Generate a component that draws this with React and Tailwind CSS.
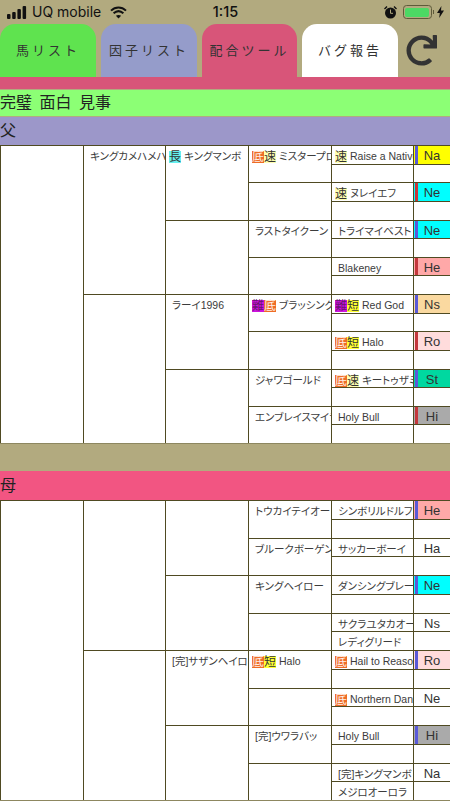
import { FaRedo } from 'react-icons/fa'

const badgeStyles = {
  長: 'bg-[#66eeee] text-[#333]',
  底: 'bg-[#ee6c26] text-[#fff0e8]',
  速: 'bg-[#ffffb0] text-[#333]',
  難: 'bg-[#cc14dc] text-[#6a1470]',
  短: 'bg-[#ffff33] text-[#333]',
}

const sire = {
  col2: [{ name: 'キングカメハメハ' }, {}],
  col3: [{ badges: ['長'], name: 'キングマンボ' }, {}, { name: 'ラーイ1996' }, {}],
  col4: [
    { badges: ['底', '速'], name: 'ミスタープロスペクター' },
    {},
    { name: 'ラストタイクーン' },
    {},
    { badges: ['難', '底'], name: 'ブラッシンググルーム' },
    {},
    { name: 'ジャワゴールド' },
    { name: 'エンブレイスマイラブ' },
  ],
  col5: [
    { badges: ['速'], name: 'Raise a Native', factor: 'Na', bg: 'bg-[#ffff00]', bar: 'bg-[#5a5ad8]' },
    { badges: ['速'], name: 'ヌレイエフ', factor: 'Ne', bg: 'bg-[#00ffff]', bar: 'bg-[#c4383c]' },
    { name: 'トライマイベスト', factor: 'Ne', bg: 'bg-[#00ffff]', bar: 'bg-[#5a5ad8]' },
    { name: 'Blakeney', factor: 'He', bg: 'bg-[#ffa8a8]', bar: 'bg-[#c4383c]' },
    { badges: ['難', '短'], name: 'Red God', factor: 'Ns', bg: 'bg-[#fad9a0]', bar: 'bg-[#5a5ad8]' },
    { badges: ['底', '短'], name: 'Halo', factor: 'Ro', bg: 'bg-[#ffdcdc]', bar: 'bg-[#c4383c]' },
    { badges: ['底', '速'], name: 'キートゥザミント', factor: 'St', bg: 'bg-[#00d8a0]', bar: 'bg-[#5a5ad8]' },
    { name: 'Holy Bull', factor: 'Hi', bg: 'bg-[#aaaaaa]', bar: 'bg-[#c4383c]' },
  ],
}

const dam = {
  col2: [{}, {}],
  col3: [{}, {}, { name: '[完]サザンヘイロー' }, {}],
  col4: [
    { name: 'トウカイテイオー' },
    { name: 'ブルークボーゲン' },
    { name: 'キングヘイロー' },
    {},
    { badges: ['底', '短'], name: 'Halo' },
    {},
    { name: '[完]ウワラバッ' },
    {},
  ],
  col5: [
    { name: 'シンボリルドルフ', factor: 'He', bg: 'bg-[#ffa8a8]', bar: 'bg-[#5a5ad8]' },
    { name: 'サッカーボーイ', factor: 'Ha' },
    { name: 'ダンシングブレーヴ', factor: 'Ne', bg: 'bg-[#00ffff]', bar: 'bg-[#5a5ad8]' },
    { name: 'サクラユタカオー', factor: 'Ns', sub: 'レディグリード' },
    { badges: ['底'], name: 'Hail to Reason', factor: 'Ro', bg: 'bg-[#ffdcdc]', bar: 'bg-[#5a5ad8]' },
    { badges: ['底'], name: 'Northern Dancer', factor: 'Ne' },
    { name: 'Holy Bull', factor: 'Hi', bg: 'bg-[#aaaaaa]', bar: 'bg-[#5a5ad8]' },
    { name: '[完]キングマンボ', factor: 'Na', sub: 'メジロオーロラ' },
  ],
}

const Name = ({ badges = [], name }) => (
  <>
    {badges.map((b, i) => (
      <span key={i} className={`inline-block w-[12px] h-[12px] text-[12px] leading-[12px] align-[-1px] [font-feature-settings:'normal'] ${badgeStyles[b]}`}>
        {b}
      </span>
    ))}
    {name && <span className="ml-[3px]">{name}</span>}
  </>
)

// spans are fixed per generation, so these classes stay written out in full
const Cell = ({ span, item = {} }) => (
  <div className={`${span} border-l border-t border-[#4f4a22] pl-[3px] overflow-hidden whitespace-nowrap text-[10.5px] leading-[20px] text-[#3c3c3c] [font-feature-settings:'palt']`}>
    <Name {...item} />
  </div>
)

const FactorCell = ({ item = {} }) => (
  <div className={`flex row-span-1 border-l border-t border-[#4f4a22] overflow-hidden ${item.bg || 'bg-white'}`}>
    <div className={`ml-[1px] w-[3px] shrink-0 ${item.bar || ''}`} />
    <div className="flex-1 pr-[4px] text-center text-[13px] leading-[20px] text-[#333]">{item.factor}</div>
  </div>
)

const Pedigree = ({ data, rows }) => (
  <div className={`grid grid-flow-col bg-white grid-cols-[83px_82px_83px_83px_82px_37px] ${rows} border-b border-[#8d8760]`}>
    <div className="row-span-16 border-l border-t border-[#4f4a22]" />
    {data.col2.map((item, i) => <Cell key={i} span="row-span-8" item={item} />)}
    {data.col3.map((item, i) => <Cell key={i} span="row-span-4" item={item} />)}
    {data.col4.map((item, i) => <Cell key={i} span="row-span-2" item={item} />)}
    {data.col5.flatMap((item, i) => [
      <Cell key={`${i}a`} span="row-span-1" item={item} />,
      <Cell key={`${i}b`} span="row-span-1" item={{ name: item.sub }} />,
    ])}
    {data.col5.flatMap((item, i) => [
      <FactorCell key={`${i}a`} item={item} />,
      <FactorCell key={`${i}b`} />,
    ])}
  </div>
)

const Tab = ({ label, className }) => (
  <div className={`h-[53px] rounded-t-[15px] flex items-center justify-center text-[13px] tracking-[3px] text-[#333] ${className}`}>
    {label}
  </div>
)

const StatusBar = () => (
  <div className="h-[24px] flex items-center justify-between pl-[7px] pr-[6px] text-[#111] font-['Inter',sans-serif]">
    <div className="flex items-center gap-[5px] w-[150px]">
      <svg width="20" height="13" viewBox="0 0 20 13" fill="#111">
        <rect x="0" y="8" width="3.5" height="5" rx="1" />
        <rect x="5.2" y="6" width="3.5" height="7" rx="1" />
        <rect x="10.4" y="3" width="3.5" height="10" rx="1" />
        <rect x="15.6" y="0" width="3.5" height="13" rx="1" />
      </svg>
      <span className="text-[14px] leading-none whitespace-nowrap">UQ mobile</span>
      <svg className="ml-[4px] shrink-0" width="17" height="13" viewBox="0 0 17 13" fill="none" stroke="#111" strokeWidth="2">
        <path d="M1 4.6C5.4 .4 11.6 .4 16 4.6" />
        <path d="M3.6 7.3C6.6 4.6 10.4 4.6 13.4 7.3" />
        <path d="M8.5 12.6 5.9 9.8C7.4 8.6 9.6 8.6 11.1 9.8Z" fill="#111" stroke="none" />
      </svg>
    </div>
    <span className="text-[14.5px] font-medium leading-none">1:15</span>
    <div className="flex items-center justify-end w-[150px]">
      <svg width="13" height="13" viewBox="0 0 13 13">
        <circle cx="6.5" cy="7" r="5.5" fill="#111" />
        <path d="M6.5 3.5V7.3H9" fill="none" stroke="#b2aa7f" strokeWidth="1" />
        <path d="M0.5 3 3 .6M12.5 3 10 .6" stroke="#111" strokeWidth="1.4" />
      </svg>
      <div className="ml-[6px] w-[29px] h-[14px] rounded-[3.5px] border border-[#5e5a3a] p-[1.5px]">
        <div className="w-full h-full rounded-[2px] bg-[#4cd964]" />
      </div>
      <div className="w-[1.5px] h-[4px] ml-[1px] bg-[#5e5a3a]" />
      <svg className="ml-[3px]" width="7" height="12" viewBox="0 0 7 12" fill="#111">
        <path d="M4.4 0 0 7h2.8L2.2 12 7 4.6H4Z" />
      </svg>
    </div>
  </div>
)

export default function App() {
  return (
    <div className="w-[450px] h-[801px] overflow-hidden bg-[#b2aa7f] font-['Liberation_Sans','Noto_Sans_CJK_JP',sans-serif]">
      <StatusBar />
      <div className="flex gap-[5px] items-end">
        <Tab label="馬リスト" className="w-[96px] bg-[#5fe34f]" />
        <Tab label="因子リスト" className="w-[96px] bg-[#959cca]" />
        <Tab label="配合ツール" className="w-[95px] bg-[#d85579]" />
        <Tab label="バグ報告" className="w-[96px] bg-white" />
        <FaRedo className="ml-[3px] mb-[11px] w-[31px] h-[31px] text-[#333]" />
      </div>
      <div className="h-[12px] bg-[#d85579]" />
      <div className="mt-[1px] h-[26px] bg-[#8cff75] text-[16px] leading-[26px] text-[#222] whitespace-pre [word-spacing:3px]">完璧 面白 見事</div>
      <div className="mt-[1px] h-[28px] bg-[#9c97c9] text-[16px] leading-[28px] text-[#222]">父</div>
      <Pedigree data={sire} rows="grid-rows-[repeat(16,18.625px)]" />
      <div className="h-[27px]" />
      <div className="h-[29px] bg-[#f25582] text-[16px] leading-[29px] text-[#222]">母</div>
      <Pedigree data={dam} rows="grid-rows-[repeat(16,18.75px)]" />
    </div>
  )
}
